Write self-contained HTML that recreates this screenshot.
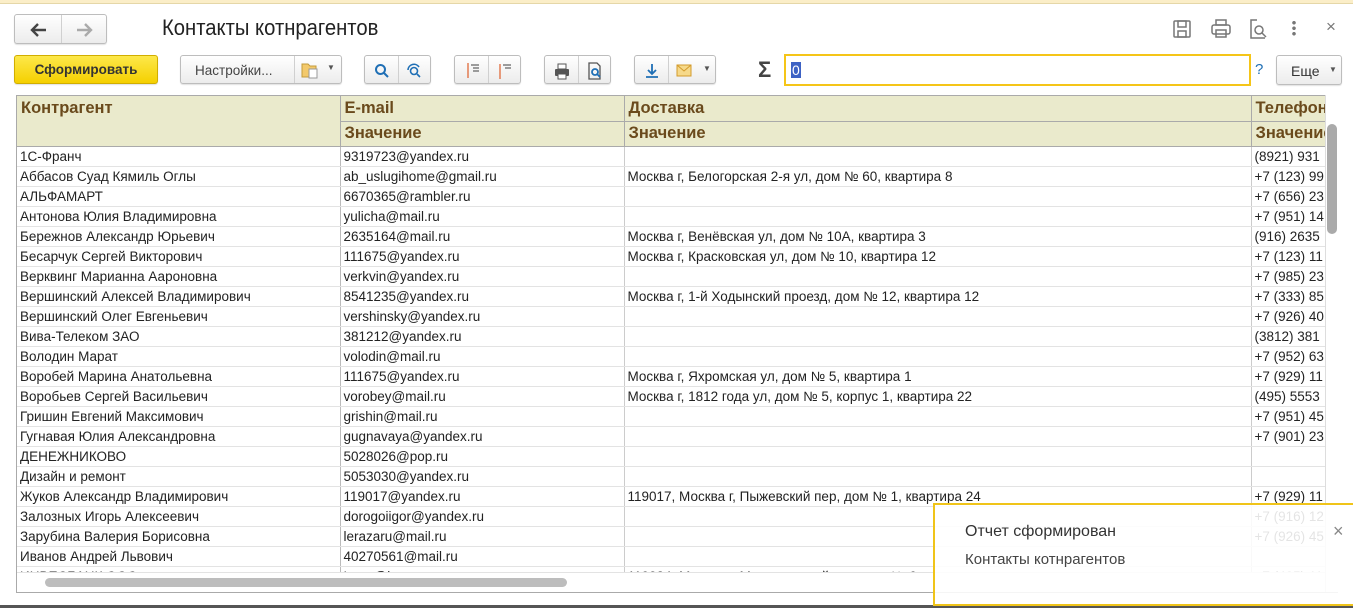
<!DOCTYPE html>
<html><head><meta charset="utf-8"><style>
*{box-sizing:border-box;margin:0;padding:0}
body{width:1353px;height:608px;overflow:hidden;background:#fff;font-family:"Liberation Sans",Arial,sans-serif;position:relative;color:#333}
.topbar{position:absolute;left:0;top:0;width:1353px;height:4px;background:#fbeec8;border-bottom:1px solid #e5d7a8}
.btn{position:absolute;border:1px solid #bdbdbd;border-radius:3px;background:linear-gradient(#fff,#ececec);box-shadow:0 1px 1px rgba(0,0,0,.12)}
.sep{position:absolute;top:0;bottom:0;width:1px;background:#d0d0d0}
.title{position:absolute;left:162px;top:15px;font-size:22px;color:#222;transform:scaleX(.92);transform-origin:left}
table{border-collapse:collapse;font-size:13.5px;table-layout:fixed}
.grid{position:absolute;left:16px;top:95px;width:1310px;height:497px;overflow:hidden;border-left:1px solid #aaa;border-top:1px solid #aaa}
th{background:#eaeacc;color:#6a4a1c;text-align:left;font-weight:bold;font-size:16.5px;padding:0 4px;border-right:1px solid #aaa;border-bottom:1px solid #aaa;height:25px;white-space:nowrap;overflow:hidden}
td{height:20px;padding:0 3px;border-right:1px solid #ccc;border-bottom:1px solid #e3e3e3;white-space:nowrap;overflow:hidden;color:#222}
td:first-child{border-right:1px solid #bbb}
.popup{position:absolute;left:933px;top:503px;width:420px;height:103px;border:2px solid #f0c419;border-right:none;background:rgba(255,255,255,.88)}
</style></head><body>
<div class="topbar"></div>
<div class="btn" style="left:14px;top:14px;width:93px;height:30px"><div class="sep" style="left:46px"></div>
<svg style="position:absolute;left:15px;top:7px" width="18" height="16"><path d="M2 8h14M8 2L2 8l6 6" fill="none" stroke="#444" stroke-width="2.4"/></svg>
<svg style="position:absolute;left:60px;top:7px" width="18" height="16"><path d="M2 8h14M10 2l6 6-6 6" fill="none" stroke="#aaa" stroke-width="2.4"/></svg></div>
<div class="title">Контакты котнрагентов</div>
<svg style="position:absolute;left:1172px;top:19px" width="20" height="20" viewBox="0 0 20 20" fill="none" stroke="#777" stroke-width="1.5"><rect x="2" y="2" width="16" height="16" rx="1"/><rect x="6" y="2" width="8" height="6"/><rect x="6" y="12" width="8" height="6"/></svg>
<svg style="position:absolute;left:1210px;top:18px" width="22" height="22" viewBox="0 0 22 22" fill="none" stroke="#777" stroke-width="1.5"><rect x="6" y="2" width="10" height="5"/><rect x="2" y="7" width="18" height="9" rx="2"/><rect x="6" y="12" width="10" height="7"/></svg>
<svg style="position:absolute;left:1248px;top:18px" width="20" height="22" viewBox="0 0 20 22" fill="none" stroke="#777" stroke-width="1.5"><path d="M9 2H3v18h14"/><circle cx="11" cy="12" r="4"/><path d="M14 15l4 4"/></svg>
<div style="position:absolute;left:1292px;top:20px;width:4px;height:16px;background:radial-gradient(circle,#777 1.6px,transparent 2px) 0 0/4px 5.5px"></div>
<div style="position:absolute;left:1326px;top:17px;font-size:17px;color:#777">×</div>

<div class="btn" style="left:14px;top:55px;width:144px;height:29px;background:linear-gradient(#fde84a,#f5d000);border-color:#d1ae00"><span style="position:absolute;left:0;right:0;top:6px;text-align:center;font-weight:bold;font-size:13.5px;color:#333">Сформировать</span></div>
<div class="btn" style="left:180px;top:55px;width:162px;height:29px"><div class="sep" style="left:113px"></div><span style="position:absolute;left:14px;top:7px;font-size:13.5px;color:#444">Настройки...</span>
<svg style="position:absolute;left:120px;top:5px" width="18" height="18"><path d="M1 3h6l2 2h6v11H1z" fill="#f3c96b" stroke="#c39a3b"/><rect x="8" y="8" width="8" height="9" fill="#fff" stroke="#999"/></svg><span style="position:absolute;left:146px;top:7px;font-size:8px;color:#555">▼</span></div>
<div class="btn" style="left:364px;top:55px;width:67px;height:29px"><div class="sep" style="left:33px"></div>
<svg style="position:absolute;left:9px;top:7px" width="16" height="16" fill="none" stroke="#1f6fb5" stroke-width="2"><circle cx="6.5" cy="6.5" r="4.5"/><path d="M10 10l4 4"/></svg>
<svg style="position:absolute;left:41px;top:7px" width="16" height="16" fill="none" stroke="#1f6fb5" stroke-width="1.6"><circle cx="8" cy="8" r="3.5"/><path d="M2 7a6 6 0 0 1 11-3M11 11l3 3"/></svg></div>
<div class="btn" style="left:454px;top:55px;width:67px;height:29px"><div class="sep" style="left:33px"></div>
<svg style="position:absolute;left:10px;top:6px" width="16" height="18" stroke-width="1.3"><path d="M3 1v15" stroke="#e06a3a"/><path d="M6 3h8M8 6h6M8 9h6" stroke="#666"/></svg>
<svg style="position:absolute;left:42px;top:6px" width="16" height="18" stroke-width="1.3"><path d="M3 2v15" stroke="#e06a3a"/><path d="M6 3h8M8 6h6" stroke="#666"/></svg></div>
<div class="btn" style="left:544px;top:55px;width:67px;height:29px"><div class="sep" style="left:33px"></div>
<svg style="position:absolute;left:8px;top:6px" width="18" height="18"><rect x="5" y="2" width="8" height="5" fill="#fff" stroke="#555"/><rect x="2" y="7" width="14" height="7" rx="1" fill="#555"/><rect x="5" y="12" width="8" height="5" fill="#fff" stroke="#555"/></svg>
<svg style="position:absolute;left:42px;top:6px" width="16" height="18" fill="none" stroke="#555" stroke-width="1.3"><path d="M2 1h8l3 3v13H2z"/><circle cx="8" cy="10" r="3" stroke="#1f6fb5" stroke-width="1.8"/><path d="M10 12l3 3" stroke="#1f6fb5" stroke-width="1.8"/></svg></div>
<div class="btn" style="left:634px;top:55px;width:82px;height:29px"><div class="sep" style="left:33px"></div>
<svg style="position:absolute;left:9px;top:6px" width="16" height="18" fill="none" stroke="#1f6fb5" stroke-width="1.8"><path d="M8 2v10M4 8l4 4 4-4M2 15h12"/></svg>
<svg style="position:absolute;left:41px;top:8px" width="16" height="13"><rect x="1" y="1" width="14" height="11" fill="#f6d98a" stroke="#d39b2c"/><path d="M1 1l7 6 7-6" fill="none" stroke="#d39b2c"/></svg><span style="position:absolute;left:68px;top:8px;font-size:8px;color:#555">▼</span></div>
<div style="position:absolute;left:758px;top:57px;font-size:22px;font-weight:bold;color:#444">Σ</div>
<div style="position:absolute;left:784px;top:54px;width:467px;height:32px;border:2px solid #f5c518;background:#fff"><span style="position:absolute;left:5px;top:6px;font-size:14px;background:#3d62c4;color:#fff;padding:0 1px">0</span></div>
<div style="position:absolute;left:1255px;top:61px;font-size:15px;color:#1f6fb5">?</div>
<div class="btn" style="left:1276px;top:55px;width:66px;height:30px"><span style="position:absolute;left:14px;top:7px;font-size:14px;color:#333">Еще</span><span style="position:absolute;left:52px;top:9px;font-size:8px;color:#555">▼</span></div>

<div class="grid">
<table style="width:1340px">
<colgroup><col style="width:323px"><col style="width:284px"><col style="width:627px"><col style="width:106px"></colgroup>
<tr><th rowspan="2" style="vertical-align:top;padding-top:3px">Контрагент</th><th>E-mail</th><th>Доставка</th><th>Телефон</th></tr>
<tr><th>Значение</th><th>Значение</th><th>Значение</th></tr>
<tr><td>1С-Франч</td><td>9319723@yandex.ru</td><td></td><td>(8921) 931</td></tr>
<tr><td>Аббасов Суад Кямиль Оглы</td><td>ab_uslugihome@gmail.ru</td><td>Москва г, Белогорская 2-я ул, дом № 60, квартира 8</td><td>+7 (123) 99</td></tr>
<tr><td>АЛЬФАМАРТ</td><td>6670365@rambler.ru</td><td></td><td>+7 (656) 23</td></tr>
<tr><td>Антонова Юлия Владимировна</td><td>yulicha@mail.ru</td><td></td><td>+7 (951) 14</td></tr>
<tr><td>Бережнов Александр Юрьевич</td><td>2635164@mail.ru</td><td>Москва г, Венёвская ул, дом № 10А, квартира 3</td><td>(916) 2635</td></tr>
<tr><td>Бесарчук Сергей Викторович</td><td>111675@yandex.ru</td><td>Москва г, Красковская ул, дом № 10, квартира 12</td><td>+7 (123) 11</td></tr>
<tr><td>Верквинг Марианна Аароновна</td><td>verkvin@yandex.ru</td><td></td><td>+7 (985) 23</td></tr>
<tr><td>Вершинский Алексей Владимирович</td><td>8541235@yandex.ru</td><td>Москва г, 1-й Ходынский проезд, дом № 12, квартира 12</td><td>+7 (333) 85</td></tr>
<tr><td>Вершинский Олег Евгеньевич</td><td>vershinsky@yandex.ru</td><td></td><td>+7 (926) 40</td></tr>
<tr><td>Вива-Телеком ЗАО</td><td>381212@yandex.ru</td><td></td><td>(3812) 381</td></tr>
<tr><td>Володин Марат</td><td>volodin@mail.ru</td><td></td><td>+7 (952) 63</td></tr>
<tr><td>Воробей Марина Анатольевна</td><td>111675@yandex.ru</td><td>Москва г, Яхромская ул, дом № 5, квартира 1</td><td>+7 (929) 11</td></tr>
<tr><td>Воробьев Сергей Васильевич</td><td>vorobey@mail.ru</td><td>Москва г, 1812 года ул, дом № 5, корпус 1, квартира 22</td><td>(495) 5553</td></tr>
<tr><td>Гришин Евгений Максимович</td><td>grishin@mail.ru</td><td></td><td>+7 (951) 45</td></tr>
<tr><td>Гугнавая Юлия Александровна</td><td>gugnavaya@yandex.ru</td><td></td><td>+7 (901) 23</td></tr>
<tr><td>ДЕНЕЖНИКОВО</td><td>5028026@pop.ru</td><td></td><td></td></tr>
<tr><td>Дизайн и ремонт</td><td>5053030@yandex.ru</td><td></td><td></td></tr>
<tr><td>Жуков Александр Владимирович</td><td>119017@yandex.ru</td><td>119017, Москва г, Пыжевский пер, дом № 1, квартира 24</td><td>+7 (929) 11</td></tr>
<tr><td>Залозных Игорь Алексеевич</td><td>dorogoiigor@yandex.ru</td><td></td><td>+7 (916) 12</td></tr>
<tr><td>Зарубина Валерия Борисовна</td><td>lerazaru@mail.ru</td><td></td><td>+7 (926) 45</td></tr>
<tr><td>Иванов Андрей Львович</td><td>40270561@mail.ru</td><td></td><td></td></tr>
<tr><td>ИНВЕСБАНК ООО</td><td>Lena@inra.ru</td><td>119034, Москва г, Мансуровский пер, дом № 9</td><td>+7 (495) 11</td></tr>
</table>
<div style="position:absolute;left:0;right:0;top:476px;height:21px;background:#fff;border-top:1px solid #e3e3e3"></div>
<div style="position:absolute;left:28px;top:482px;width:522px;height:9px;border-radius:5px;background:#bdbdbd"></div>
<div style="position:absolute;left:1309px;top:0;width:12px;height:497px;background:#fff"></div>
</div>
<div style="position:absolute;left:1327px;top:124px;width:10px;height:110px;border-radius:5px;background:#aaa"></div>
<div style="position:absolute;left:1325px;top:95px;width:1px;height:497px;background:#ddd"></div>
<div style="position:absolute;left:16px;top:592px;width:1322px;height:1px;background:#aaa"></div>
<div style="position:absolute;left:0;top:605px;width:1353px;height:3px;background:#555"></div>
<div class="popup"><div style="position:absolute;left:30px;top:18px;font-size:16px;color:#333">Отчет сформирован</div><div style="position:absolute;left:30px;top:46px;font-size:15px;color:#444">Контакты котнрагентов</div><div style="position:absolute;left:398px;top:16px;font-size:18px;color:#888">×</div></div>
</body></html>
